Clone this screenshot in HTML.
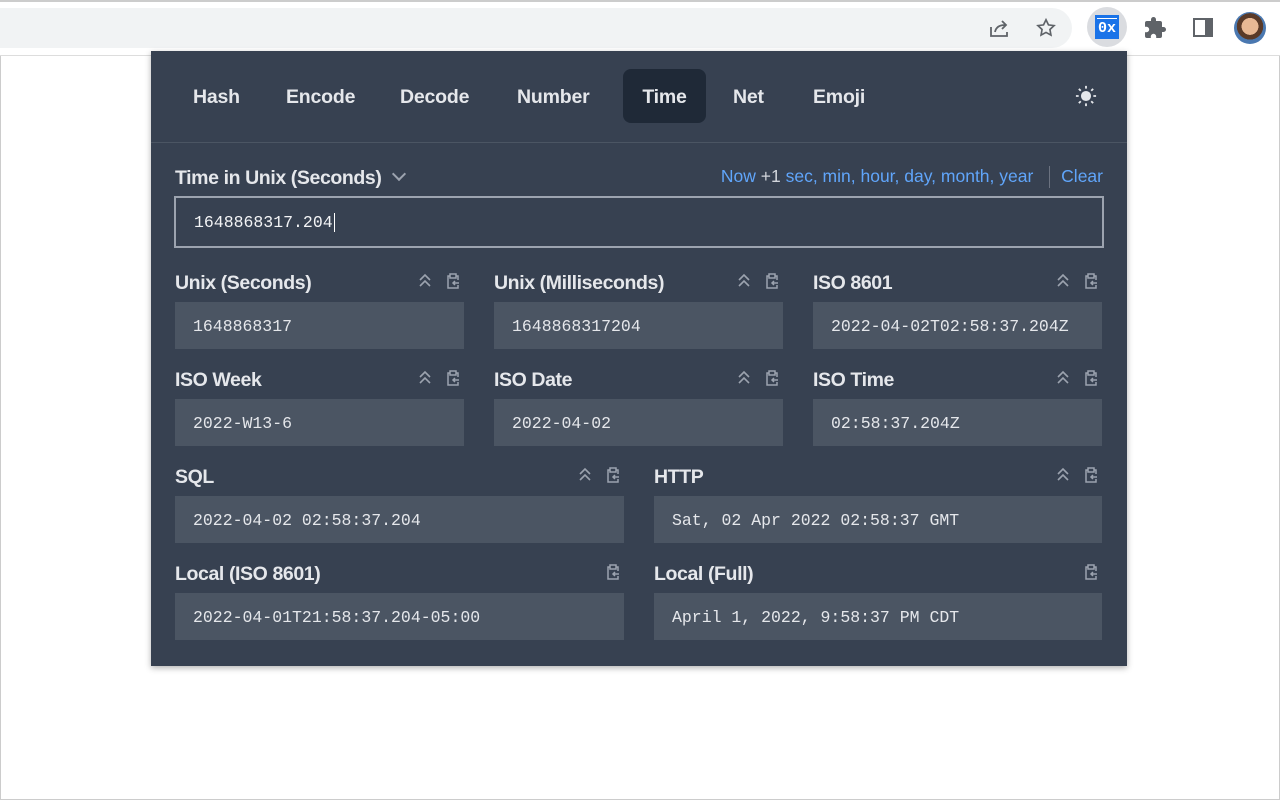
<!DOCTYPE html>
<html><head><style>
*{box-sizing:border-box;margin:0;padding:0}
body{width:1280px;height:800px;background:#fff;position:relative;overflow:hidden;font-family:"Liberation Sans",sans-serif;outline:1px solid #ccc;outline-offset:-1px}
.tb{position:absolute;left:0;top:0;width:1280px;height:56px;background:#fff;border-bottom:1px solid #ddd;border-top:2px solid #ccc}
.omni{position:absolute;left:0;top:6px;width:1072px;height:40px;background:#f1f3f4;border-radius:0 20px 20px 0}
.pop{position:absolute;left:151px;top:51px;width:976px;height:615px;background:#374151;box-shadow:0 2px 6px rgba(0,0,0,.3);z-index:2}
.tab{position:absolute;top:18px;height:54px;line-height:56px;color:#e5e7eb;font-size:19.5px;font-weight:bold;padding:0 18px;letter-spacing:-0.2px}
.tab.a{background:#1f2937;border-radius:8px}
.hr{position:absolute;left:0;top:91px;width:976px;height:1px;background:#4b5563}
.lbl{position:absolute;color:#e5e7eb;font-size:19.5px;font-weight:bold;letter-spacing:-0.4px}
.box{position:absolute;background:#4b5563;height:47px;color:#e5e7eb;font-family:"Liberation Mono",monospace;font-size:16.5px;line-height:49px;padding-left:18px}
.ic{position:absolute;width:14px;height:16px}
.links{position:absolute;right:24px;top:115px;font-size:17.5px;color:#60a5fa}
</style></head><body>
<div class="tb"><div class="omni"></div>
<svg style="position:absolute;left:988px;top:15px" width="22" height="22" viewBox="0 0 22 22" fill="none" stroke="#5f6368" stroke-width="1.8"><path d="M3 10v9h16v-4"/><path d="M7 15c1-5 5-7 10-7M14 4l4 4-4 4"/></svg>
<svg style="position:absolute;left:1035px;top:15px" width="22" height="22" viewBox="0 0 24 24" fill="none" stroke="#5f6368" stroke-width="1.8"><path d="M12 3l2.7 5.6 6.1.8-4.5 4.2 1.1 6.1L12 16.8 6.6 19.7l1.1-6.1L3.2 9.4l6.1-.8z"/></svg>
<div style="position:absolute;left:1087px;top:5px;width:40px;height:40px;border-radius:20px;background:#dadce0"></div>
<div style="position:absolute;left:1095px;top:13px;width:24px;height:24px;background:#1a73e8;color:#fff;font-family:'Liberation Mono',monospace;font-weight:bold;font-size:15px;line-height:28px;text-align:center">0x<div style="position:absolute;left:2px;top:3px;width:20px;height:1px;background:#fff"></div></div>
<svg style="position:absolute;left:1143px;top:14px" width="24" height="24" viewBox="0 0 24 24" fill="#5f6368"><path d="M20.5 11H19V7a2 2 0 0 0-2-2h-4V3.5a2.5 2.5 0 0 0-5 0V5H4a2 2 0 0 0-2 2v3.8h1.5a2.7 2.7 0 0 1 0 5.4H2V20a2 2 0 0 0 2 2h3.8v-1.5a2.7 2.7 0 0 1 5.4 0V22H17a2 2 0 0 0 2-2v-4h1.5a2.5 2.5 0 0 0 0-5z"/></svg>
<div style="position:absolute;left:1193px;top:16px;width:20px;height:19px;border:2.5px solid #5f6368;border-right-width:8px"></div>
<div style="position:absolute;left:1234px;top:10px;width:32px;height:32px;border-radius:16px;background:radial-gradient(circle at 50% 45%,#e8b894 0 35%,#5a3a28 36% 55%,#4a78b0 56%)"></div>
</div>
<div class="pop">
<div class="tab" style="left:24px">Hash</div>
<div class="tab" style="left:117px">Encode</div>
<div class="tab" style="left:231px">Decode</div>
<div class="tab" style="left:348px">Number</div>
<div class="tab a" style="left:472px;width:83px;text-align:center;padding:0">Time</div>
<div class="tab" style="left:564px">Net</div>
<div class="tab" style="left:644px">Emoji</div>
<svg style="position:absolute;left:924px;top:34px" width="22" height="22" viewBox="0 0 24 24" fill="none" stroke="#e5e7eb" stroke-width="2"><circle cx="12" cy="12" r="4.5" fill="#e5e7eb"/><path d="M12 1v3M12 20v3M1 12h3M20 12h3M4.2 4.2l2.1 2.1M17.7 17.7l2.1 2.1M4.2 19.8l2.1-2.1M17.7 6.3l2.1-2.1"/></svg>
<div class="hr"></div>
<div class="lbl" style="left:24px;top:116px">Time in Unix (Seconds) <span style="display:inline-block;width:10px;height:10px;border-right:2px solid #9ca3af;border-bottom:2px solid #9ca3af;transform:rotate(45deg);margin:0 0 5px 8px"></span></div>
<div class="links">Now <span style="color:#d1d5db">+1</span> sec, min, hour, day, month, year <span style="display:inline-block;width:1px;height:22px;background:#6b7280;vertical-align:middle;margin:0 11px"></span>Clear</div>
<div style="position:absolute;left:23px;top:145px;width:930px;height:52px;border:2px solid #9ca3af;color:#f3f4f6;font-family:'Liberation Mono',monospace;font-size:16.5px;line-height:50px;padding-left:18px">1648868317.204<span style="border-left:1px solid #fff;margin-left:1px"></span></div>
<div id="g"></div>
</div>
<script>
var F=[[24,231,289,'Unix (Seconds)','1648868317',1],[343,231,289,'Unix (Milliseconds)','1648868317204',1],[662,231,289,'ISO 8601','2022-04-02T02:58:37.204Z',1],
[24,328,289,'ISO Week','2022-W13-6',1],[343,328,289,'ISO Date','2022-04-02',1],[662,328,289,'ISO Time','02:58:37.204Z',1],
[24,425,449,'SQL','2022-04-02 02:58:37.204',1],[503,425,448,'HTTP','Sat, 02 Apr 2022 02:58:37 GMT',1],
[24,522,449,'Local (ISO 8601)','2022-04-01T21:58:37.204-05:00',0],[503,522,448,'Local (Full)','April 1, 2022, 9:58:37 PM CDT',0]];
var h='';
var up='<path d="M2 7l5-5 5 5M2 13l5-5 5 5" fill="none" stroke="#9ca3af" stroke-width="1.6"/>';
var cp='<path d="M4 3H2v12h10v-3M10 3h2v4M4 1h6v4H4zM13 10H7M9 8l-2 2 2 2" fill="none" stroke="#9ca3af" stroke-width="1.5"/>';
F.forEach(function(f){var x=f[0],y=f[1],w=f[2];
h+='<div class="lbl" style="left:'+x+'px;top:'+(y-10)+'px">'+f[3]+'</div>';
h+='<div class="box" style="left:'+x+'px;top:'+(y+20)+'px;width:'+w+'px">'+f[4]+'</div>';
var r=x+w;
if(f[5])h+='<svg class="ic" style="left:'+(r-46)+'px;top:'+(y-9)+'px" viewBox="0 0 14 16">'+up+'</svg>';
h+='<svg class="ic" style="left:'+(r-18)+'px;top:'+(y-9)+'px" viewBox="0 0 14 16">'+cp+'</svg>';});
document.getElementById('g').innerHTML=h;
</script>
</body></html>
